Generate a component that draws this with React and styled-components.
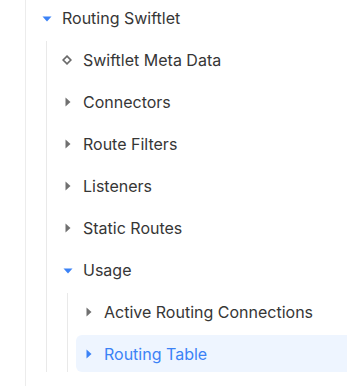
import React from "react";
import styled, { createGlobalStyle } from "styled-components";

const Global = createGlobalStyle`
  html, body { margin: 0; padding: 0; background: #ffffff; overflow: hidden; }
  body { font-family: Inter, "Noto Sans", "Liberation Sans", sans-serif; }
`;

const Page = styled.div`
  min-height: 100vh;
  margin-left: 25px;
  border-left: 1px solid #ececec;
  padding-left: 8px;
  box-sizing: border-box;
`;

const Tree = styled.div`
  margin-top: -1px;
`;

const Node = styled.div`
  display: flex;
  flex-direction: column;
  gap: 5px;
`;

const Children = styled.div`
  display: flex;
  flex-direction: column;
  gap: 5px;
  margin-left: 12px;
  border-left: 1px solid #e9e9e9;
  padding-left: 8px;
`;

const Row = styled.div`
  display: flex;
  align-items: center;
  gap: 10px;
  height: 37px;
  padding-left: 8px;
  border-radius: 6px 0 0 6px;
  background: ${(p) => (p.$active ? "#eef5ff" : "transparent")};
  color: ${(p) => (p.$active ? "#3b82f6" : "#363636")};
  font-size: 16px;
  line-height: 1;
  white-space: nowrap;
`;

const IconBox = styled.span`
  width: 10px;
  height: 10px;
  display: flex;
  align-items: center;
  justify-content: center;
  flex: none;
`;

const Label = styled.span`
  letter-spacing: 0;
`;

function Icon({ type, active }) {
  if (type === "down") {
    return (
      <IconBox>
        <svg width="10" height="6" viewBox="0 0 10 6" style={{ marginTop: 3 }}>
          <path d="M0.5 0.5 H9.5 L5 5.5 Z" fill="#3b82f6" />
        </svg>
      </IconBox>
    );
  }
  if (type === "leaf") {
    return (
      <IconBox>
        <svg width="10" height="10" viewBox="0 0 10 10" style={{ marginLeft: -3 }}>
          <path d="M5 1.2 L8.8 5 L5 8.8 L1.2 5 Z" fill="none" stroke="#6b6b6b" strokeWidth="1.7" />
        </svg>
      </IconBox>
    );
  }
  return (
    <IconBox>
      <svg width="6" height="10" viewBox="0 0 6 10" style={{ marginLeft: -1 }}>
        <path d="M0.5 0.5 L5.5 5 L0.5 9.5 Z" fill={active ? "#3b82f6" : "#707070"} />
      </svg>
    </IconBox>
  );
}

function Item({ icon, label, active, children }) {
  return (
    <Node>
      <Row $active={active}>
        <Icon type={icon} active={active} />
        <Label>{label}</Label>
      </Row>
      {children ? <Children>{children}</Children> : null}
    </Node>
  );
}

export default function App() {
  return (
    <>
      <Global />
      <Page>
        <Tree>
          <Item icon="down" label="Routing Swiftlet">
            <Item icon="leaf" label="Swiftlet Meta Data" />
            <Item icon="right" label="Connectors" />
            <Item icon="right" label="Route Filters" />
            <Item icon="right" label="Listeners" />
            <Item icon="right" label="Static Routes" />
            <Item icon="down" label="Usage">
              <Item icon="right" label="Active Routing Connections" />
              <Item icon="right" label="Routing Table" active />
            </Item>
          </Item>
        </Tree>
      </Page>
    </>
  );
}
